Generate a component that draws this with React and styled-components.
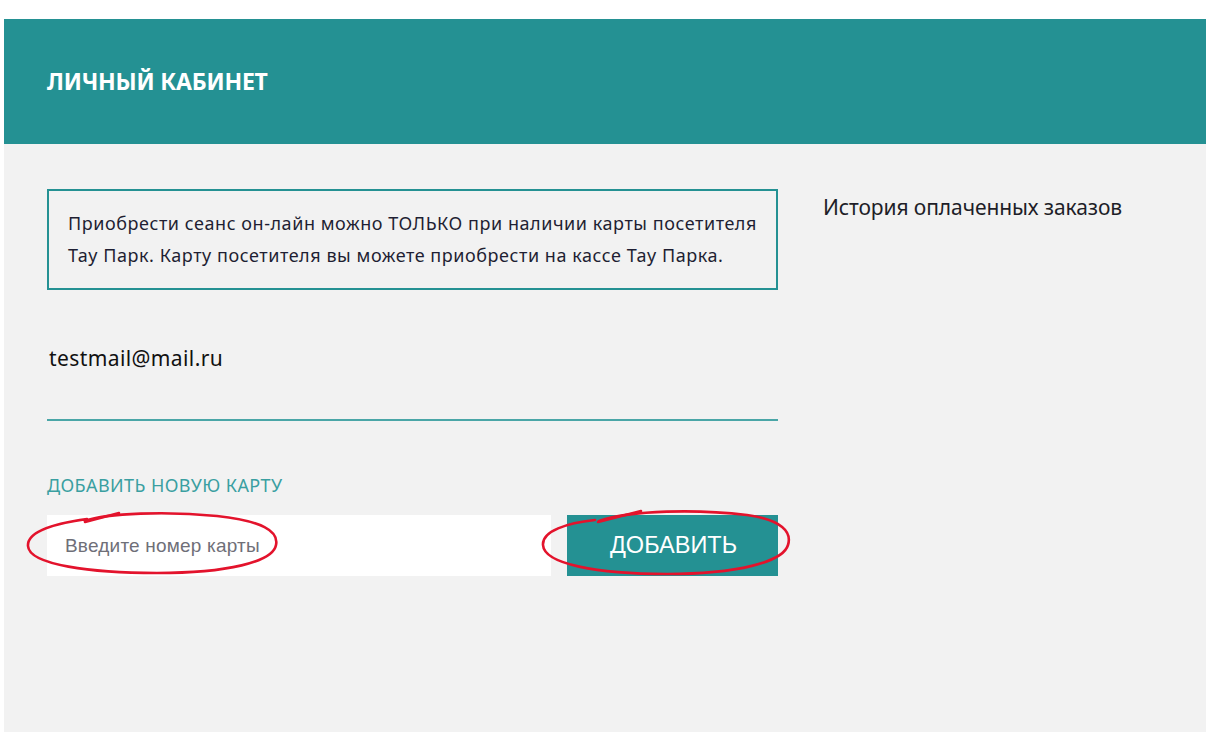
import React from "react";
import styled, { createGlobalStyle } from "styled-components";

const Global = createGlobalStyle`
  html, body { margin: 0; padding: 0; background: #ffffff; }
  body { font-family: "Open Sans", "Noto Sans", sans-serif; }
  * { box-sizing: border-box; }
`;

const Page = styled.div`
  width: 1209px;
  height: 752px;
  padding: 19px 3px 20px 4px;
`;

const Panel = styled.div`
  width: 1202px;
  height: 713px;
  background: #f2f2f2;
  display: flex;
  flex-direction: column;
`;

const Header = styled.header`
  height: 125px;
  background: #249193;
  display: flex;
  align-items: center;
  padding-left: 43px;
`;

const Title = styled.h1`
  margin: 0;
  color: #ffffff;
  font-family: "Noto Sans", "Open Sans", sans-serif;
  font-weight: 700;
  font-size: 23px;
  letter-spacing: -0.2px;
  padding-bottom: 2px;
`;

const Content = styled.div`
  display: grid;
  grid-template-columns: 731px 1fr;
  column-gap: 45px;
  padding: 45px 0 0 43px;
`;

const Left = styled.div`
  display: flex;
  flex-direction: column;
`;

const Notice = styled.div`
  border: 2px solid #249193;
  height: 101px;
  padding: 16px 19px;
  font-family: "Noto Sans", sans-serif;
  font-size: 18px;
  line-height: 32px;
  color: #1f1f33;
  letter-spacing: 0.55px;
  white-space: nowrap;
`;

const Email = styled.div`
  margin-top: 53px;
  padding: 0 0 46px 2px;
  border-bottom: 2px solid #4aa6a7;
  font-family: "Noto Sans", sans-serif;
  font-size: 21px;
  line-height: 30px;
  color: #111;
  letter-spacing: 0.4px;
`;

const SectionLabel = styled.div`
  margin-top: 52px;
  font-family: "Noto Sans", sans-serif;
  font-size: 18px;
  line-height: 24px;
  color: #3a9fa1;
  text-transform: uppercase;
  letter-spacing: 0.4px;
`;

const Row = styled.div`
  position: relative;
  margin-top: 18px;
  display: flex;
  gap: 16px;
  height: 61px;
`;

const CardInput = styled.input`
  width: 504px;
  height: 61px;
  border: none;
  outline: none;
  background: #ffffff;
  padding: 0 0 0 18px;
  font-family: "Liberation Sans", Arial, sans-serif;
  font-size: 19px;
  letter-spacing: 0.2px;
  color: #333;
  &::placeholder { color: #6f6f78; }
`;

const AddButton = styled.button`
  width: 211px;
  height: 61px;
  border: none;
  background: #249193;
  color: #ffffff;
  font-family: "Liberation Sans", Arial, sans-serif;
  font-size: 23.5px;
  padding: 0 0 0 2px;
  cursor: pointer;
`;

const Marks = styled.svg`
  position: absolute;
  left: 0;
  top: 0;
  overflow: visible;
  pointer-events: none;
`;

const Right = styled.div`
  padding-top: 5px;
`;

const HistoryLink = styled.div`
  font-family: "Noto Sans", sans-serif;
  font-size: 21px;
  line-height: 26px;
  color: #1e1e28;
  letter-spacing: -0.1px;
`;

export default function App() {
  return (
    <>
      <Global />
      <Page>
        <Panel>
          <Header>
            <Title>ЛИЧНЫЙ КАБИНЕТ</Title>
          </Header>
          <Content>
            <Left>
              <Notice>
                Приобрести сеанс он-лайн можно ТОЛЬКО при наличии карты посетителя
                <br />
                Тау Парк. Карту посетителя вы можете приобрести на кассе Тау Парка.
              </Notice>
              <Email>testmail@mail.ru</Email>
              <SectionLabel>Добавить новую карту</SectionLabel>
              <Row>
                <CardInput placeholder="Введите номер карты" />
                <AddButton>ДОБАВИТЬ</AddButton>
                <Marks width="731" height="61" viewBox="0 0 731 61">
                  <g fill="none" stroke="#e3132c" strokeWidth="2.6" strokeLinecap="round">
                    <path d="M38 6 C 60 -2, 120 -4, 170 1 C 215 6, 232 16, 229 30 C 226 47, 180 58, 110 58 C 45 58, -18 50, -19 31 C -20 16, 10 8, 40 4" />
                    <path d="M38 7 L 72 -2" />
                    <path d="M552 6 C 585 -5, 650 -6, 700 0 C 735 5, 745 17, 741 30 C 736 47, 690 59, 620 59 C 550 59, 497 49, 496 30 C 495 16, 520 8, 548 5" />
                    <path d="M551 7 L 594 -4" />
                  </g>
                </Marks>
              </Row>
            </Left>
            <Right>
              <HistoryLink>История оплаченных заказов</HistoryLink>
            </Right>
          </Content>
        </Panel>
      </Page>
    </>
  );
}
